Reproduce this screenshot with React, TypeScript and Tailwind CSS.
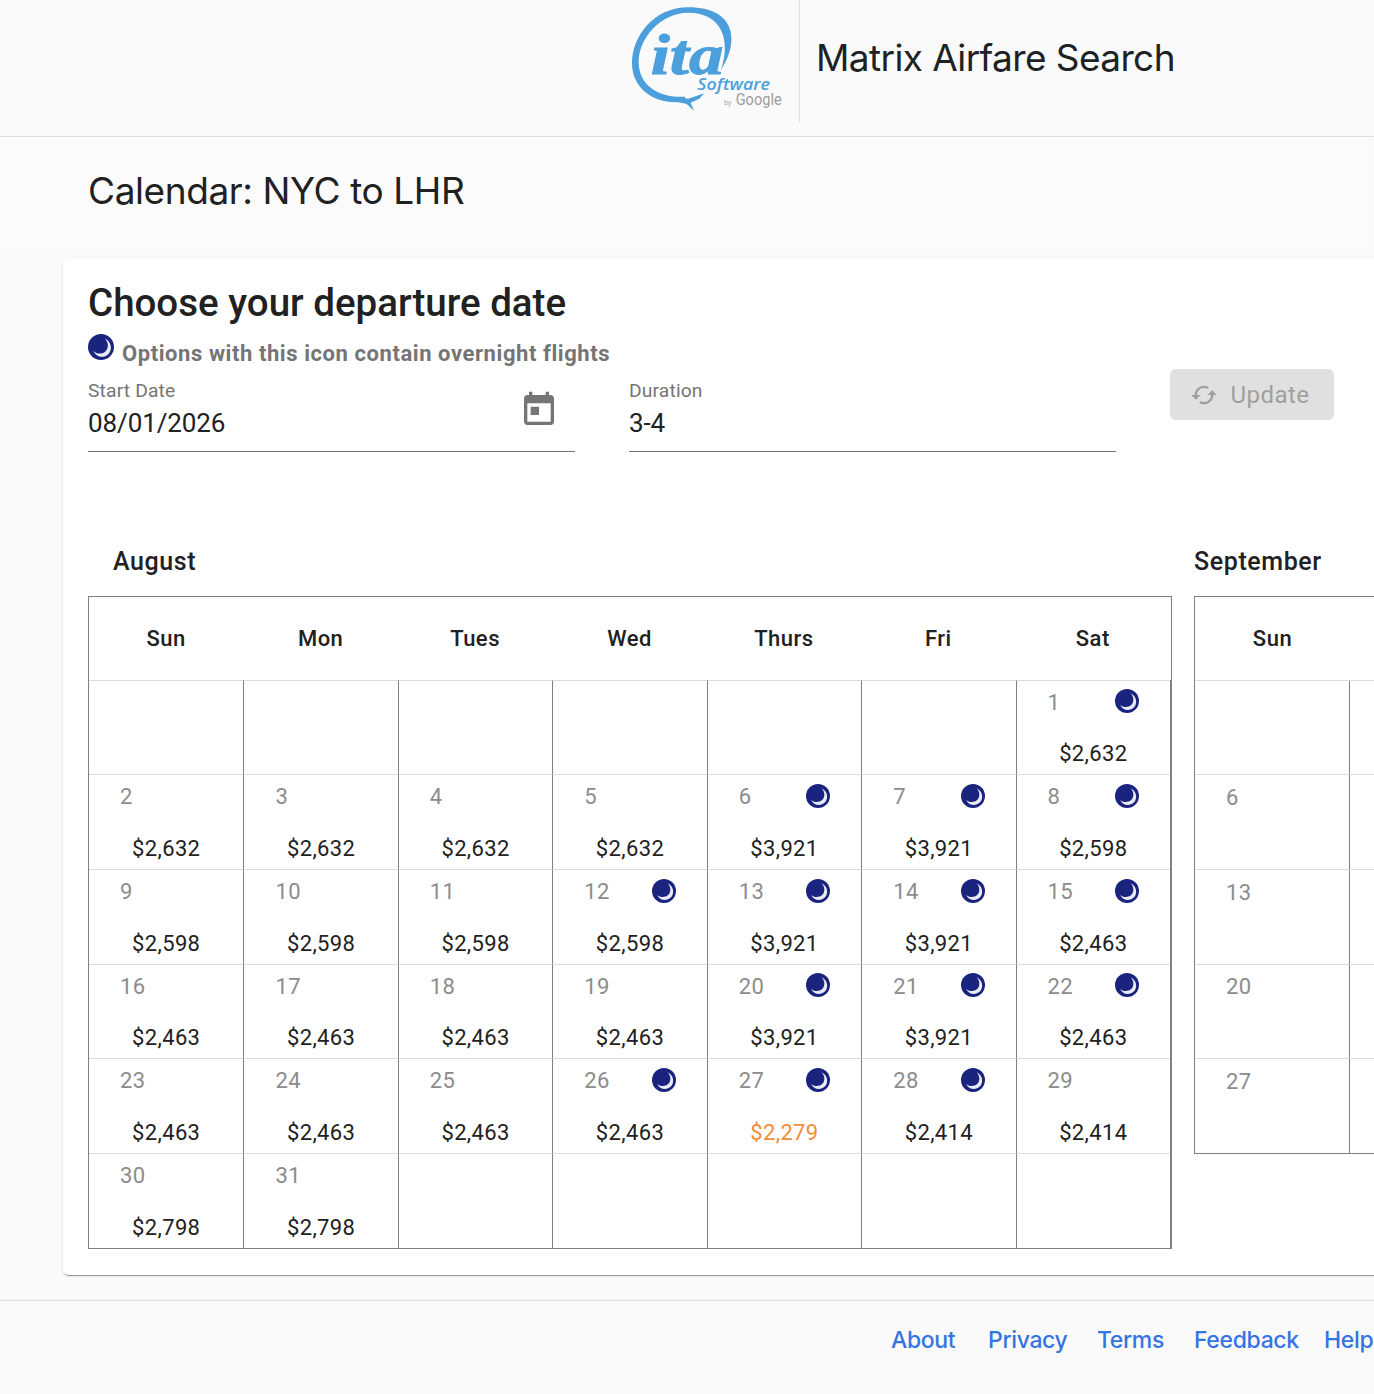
const roboto = { fontFamily: 'Roboto, sans-serif' };
const inter = { fontFamily: 'Inter, sans-serif' };

type Day = {
  date: number;
  price: string;
  moon?: boolean;
  cheap?: boolean;
};

const august: (Day | null)[][] = [
  [
    null,
    null,
    null,
    null,
    null,
    null,
    { date: 1, price: '$2,632', moon: true },
  ],
  [
    { date: 2, price: '$2,632' },
    { date: 3, price: '$2,632' },
    { date: 4, price: '$2,632' },
    { date: 5, price: '$2,632' },
    { date: 6, price: '$3,921', moon: true },
    { date: 7, price: '$3,921', moon: true },
    { date: 8, price: '$2,598', moon: true },
  ],
  [
    { date: 9, price: '$2,598' },
    { date: 10, price: '$2,598' },
    { date: 11, price: '$2,598' },
    { date: 12, price: '$2,598', moon: true },
    { date: 13, price: '$3,921', moon: true },
    { date: 14, price: '$3,921', moon: true },
    { date: 15, price: '$2,463', moon: true },
  ],
  [
    { date: 16, price: '$2,463' },
    { date: 17, price: '$2,463' },
    { date: 18, price: '$2,463' },
    { date: 19, price: '$2,463' },
    { date: 20, price: '$3,921', moon: true },
    { date: 21, price: '$3,921', moon: true },
    { date: 22, price: '$2,463', moon: true },
  ],
  [
    { date: 23, price: '$2,463' },
    { date: 24, price: '$2,463' },
    { date: 25, price: '$2,463' },
    { date: 26, price: '$2,463', moon: true },
    { date: 27, price: '$2,279', moon: true, cheap: true },
    { date: 28, price: '$2,414', moon: true },
    { date: 29, price: '$2,414' },
  ],
  [
    { date: 30, price: '$2,798' },
    { date: 31, price: '$2,798' },
    null,
    null,
    null,
    null,
    null,
  ],
];

const weekdays = ['Sun', 'Mon', 'Tues', 'Wed', 'Thurs', 'Fri', 'Sat'];
const septemberSundays = [null, 6, 13, 20, 27];
const footerLinks = [
  { label: 'About', width: 'w-[97px]' },
  { label: 'Privacy', width: 'w-[109px]' },
  { label: 'Terms', width: 'w-[97px]' },
  { label: 'Feedback', width: 'w-[130px]' },
  { label: 'Help', width: 'w-[48px]' },
];

function Moon({ className = 'h-6 w-6' }: { className?: string }) {
  return (
    <svg viewBox="0 0 24 24" className={`shrink-0 ${className}`}>
      <circle cx="12" cy="12" r="12" fill="#1a237e" />
      <path
        d="M15.5 4.2 C19.6 8 19 14 15.5 16.6 C12 19 7.5 18.3 5 15.4 C7.5 21.5 14.5 22.6 18.8 18.6 C23 14.4 21.5 6.8 15.5 4.2 Z"
        fill="#e8eaf6"
      />
    </svg>
  );
}

function Logo() {
  return (
    <svg viewBox="0 0 600 390" className="h-[130px] w-[200px]">
      <path
        d="M302 212 C358 130 352 22 205 22 C100 22 36 110 36 190 C36 270 110 318 195 305 L195 290 C120 296 58 258 56 190 C54 115 122 38 205 38 C305 38 335 120 302 212 Z"
        fill="#4a9fdc"
      />
      <path
        d="M172 292 L205 296 L252 280 L238 296 L212 308 L222 332 L200 312 L170 305 Z"
        fill="#4a9fdc"
      />
      <text
        x="92"
        y="222"
        fontFamily="Liberation Serif"
        fontWeight="700"
        fontStyle="italic"
        fontSize="168"
        textLength="218"
        lengthAdjust="spacingAndGlyphs"
        fill="#4a9fdc"
        stroke="#4a9fdc"
        strokeWidth="3"
      >
        ita
      </text>
      <text
        x="232"
        y="270"
        fontFamily="Open Sans"
        fontWeight="600"
        fontStyle="italic"
        fontSize="46"
        textLength="218"
        lengthAdjust="spacingAndGlyphs"
        fill="#4a9fdc"
      >
        Software
      </text>
      <text x="312" y="314" fontFamily="Open Sans" fontSize="20" fill="#9e9e9e">
        by
      </text>
      <text
        x="347"
        y="316"
        fontFamily="Roboto"
        fontSize="48"
        textLength="138"
        lengthAdjust="spacingAndGlyphs"
        fill="#9e9e9e"
      >
        Google
      </text>
    </svg>
  );
}

function DayCell({ day, first }: { day: Day | null; first: boolean }) {
  return (
    <div
      className={`h-[94.7px] border-t border-[#dcdcdc] ${
        first ? '' : 'border-l border-l-[#808080]'
      }`}
    >
      {day && (
        <div className="flex h-full flex-col px-[31px] pt-[8.5px]">
          <div className="flex h-[24px] items-center justify-between">
            <span className="mt-[3px] text-[22px] leading-[24px] tracking-[0.4px] text-[#8c8c8c]">
              {day.date}
            </span>
            {day.moon && <Moon />}
          </div>
          <div
            className={`mt-[28px] text-center text-[22px] leading-[26px] tracking-[0.35px] ${
              day.cheap ? 'text-[#f28c38]' : 'text-[#212121]'
            }`}
          >
            {day.price}
          </div>
        </div>
      )}
    </div>
  );
}

function MonthHeader({ label, className }: { label: string; className: string }) {
  return (
    <h3
      className={`text-[25px] font-medium leading-[30px] tracking-[0.6px] text-[#212121] ${className}`}
    >
      {label}
    </h3>
  );
}

function Field({ label, value, icon }: { label: string; value: string; icon?: boolean }) {
  return (
    <div className="relative h-[72px] w-[487px] border-b border-[#757575]">
      <div className="text-[19.25px] leading-[22px] tracking-[0.15px] text-[#757575]">
        {label}
      </div>
      <div className="mt-[5px] text-[26px] leading-[32px] tracking-[-0.1px] text-[#212121]">
        {value}
      </div>
      {icon && (
        <svg
          viewBox="0 0 24 24"
          className="absolute right-[16px] top-[10px] h-[40px] w-[40px]"
          fill="#757575"
        >
          <path d="M19 3h-1V1h-2v2H8V1H6v2H5c-1.11 0-1.99.9-1.99 2L3 19c0 1.1.89 2 2 2h14c1.1 0 2-.9 2-2V5c0-1.1-.9-2-2-2zm0 16H5V8h14v11zM7 10h5v5H7z" />
        </svg>
      )}
    </div>
  );
}

export default function App() {
  return (
    <div
      className="h-[1394px] w-[1374px] overflow-hidden bg-[#fafafa] text-[#212121]"
      style={roboto}
    >
      <header className="flex h-[137px] border-b border-[#dedede] pl-[620px]">
        <Logo />
        <div className="ml-[-21px] flex h-[122px] items-center border-l border-[#dedede] pb-[6px] pl-[16px]">
          <h1
            className="text-[37px] font-normal leading-[46px] tracking-[-0.6px] text-[#202124]"
            style={inter}
          >
            Matrix Airfare Search
          </h1>
        </div>
      </header>

      <div className="mb-[13px] flex h-[108px] w-[1370px] items-center bg-[#fbfbfb] pl-[88px]">
        <h2
          className="text-[37px] font-normal leading-[46px] tracking-[-0.4px] text-[#212121]"
          style={inter}
        >
          Calendar: NYC to LHR
        </h2>
      </div>

      <main className="ml-[63px] h-[1017px] w-[1400px] rounded-[6px] bg-white px-[25px] pt-[22px] shadow-[0_1px_3px_rgba(0,0,0,0.12),0_2px_1px_-1px_rgba(0,0,0,0.35)]">
        <h2 className="text-[38.5px] font-medium leading-[46px] text-[#212121]">
          Choose your departure date
        </h2>
        <div className="mt-[9px] flex h-[30px] items-start">
          <Moon className="mt-[-1px] h-[26px] w-[26px]" />
          <span className="ml-[8px] mt-[4px] text-[22px] font-bold leading-[30px] tracking-[0.57px] text-[#757575]">
            Options with this icon contain overnight flights
          </span>
        </div>
        <div className="mt-[15px] flex items-start">
          <Field label="Start Date" value="08/01/2026" icon />
          <div className="ml-[54px]">
            <Field label="Duration" value="3-4" />
          </div>
          <button
            type="button"
            className="ml-[54px] mt-[-11px] flex h-[51px] w-[164px] items-center justify-center gap-[12px] rounded-[6px] bg-[#e0e0e0] pr-[4px] text-[24px] tracking-[0.5px] text-[#a0a0a0]"
          >
            <svg viewBox="0 0 24 24" className="h-[28px] w-[28px]" fill="#9e9e9e">
              <path d="M19 8l-4 4h3c0 3.31-2.69 6-6 6-1.01 0-1.97-.25-2.8-.7l-1.46 1.46C8.97 19.54 10.43 20 12 20c4.42 0 8-3.58 8-8h3l-4-4zM6 12c0-3.31 2.69-6 6-6 1.01 0 1.97.25 2.8.7l1.46-1.46C15.03 4.46 13.57 4 12 4c-4.42 0-8 3.58-8 8H1l4 4 4-4H6z" />
            </svg>
            Update
          </button>
        </div>

        <div className="mt-[95px] flex items-start gap-[22px]">
          <section className="w-[1084px] shrink-0">
            <MonthHeader label="August" className="mb-[19px] ml-[25px]" />
            <div className="border border-[#808080]">
              <div className="grid h-[82.7px] w-[1081px] grid-cols-7 items-center text-center text-[22px] font-medium tracking-[0.5px] text-[#212121]">
                {weekdays.map((name) => (
                  <div key={name}>{name}</div>
                ))}
              </div>
              {august.map((week, i) => (
                <div
                  key={i}
                  className="grid w-[1082px] grid-cols-7 border-r border-[#808080]"
                >
                  {week.map((day, j) => (
                    <DayCell key={j} day={day} first={j === 0} />
                  ))}
                </div>
              ))}
            </div>
          </section>

          <section className="w-[400px] shrink-0">
            <MonthHeader label="September" className="mb-[19px]" />
            <div className="border border-[#808080]">
              <div className="flex h-[82.7px] w-[155px] items-center justify-center text-[22px] font-medium tracking-[0.5px] text-[#212121]">
                Sun
              </div>
              {septemberSundays.map((date, i) => (
                <div key={i} className="h-[94.7px] border-t border-[#dcdcdc]">
                  <div className="h-full w-[155px] border-r border-[#808080] pl-[31px] pt-[10.5px] text-[22px] leading-[24px] tracking-[0.4px] text-[#8c8c8c]">
                    {date}
                  </div>
                </div>
              ))}
            </div>
          </section>
        </div>
      </main>

      <footer className="mt-[25px] flex h-[94px] items-start border-t border-[#dedede] pl-[891px] pt-[24px]">
        {footerLinks.map((link) => (
          <a
            key={link.label}
            href="#"
            className={`${link.width} shrink-0 text-[23px] font-medium leading-[30px] tracking-[-0.35px] text-[#3574e3]`}
            style={inter}
          >
            {link.label}
          </a>
        ))}
      </footer>
    </div>
  );
}
